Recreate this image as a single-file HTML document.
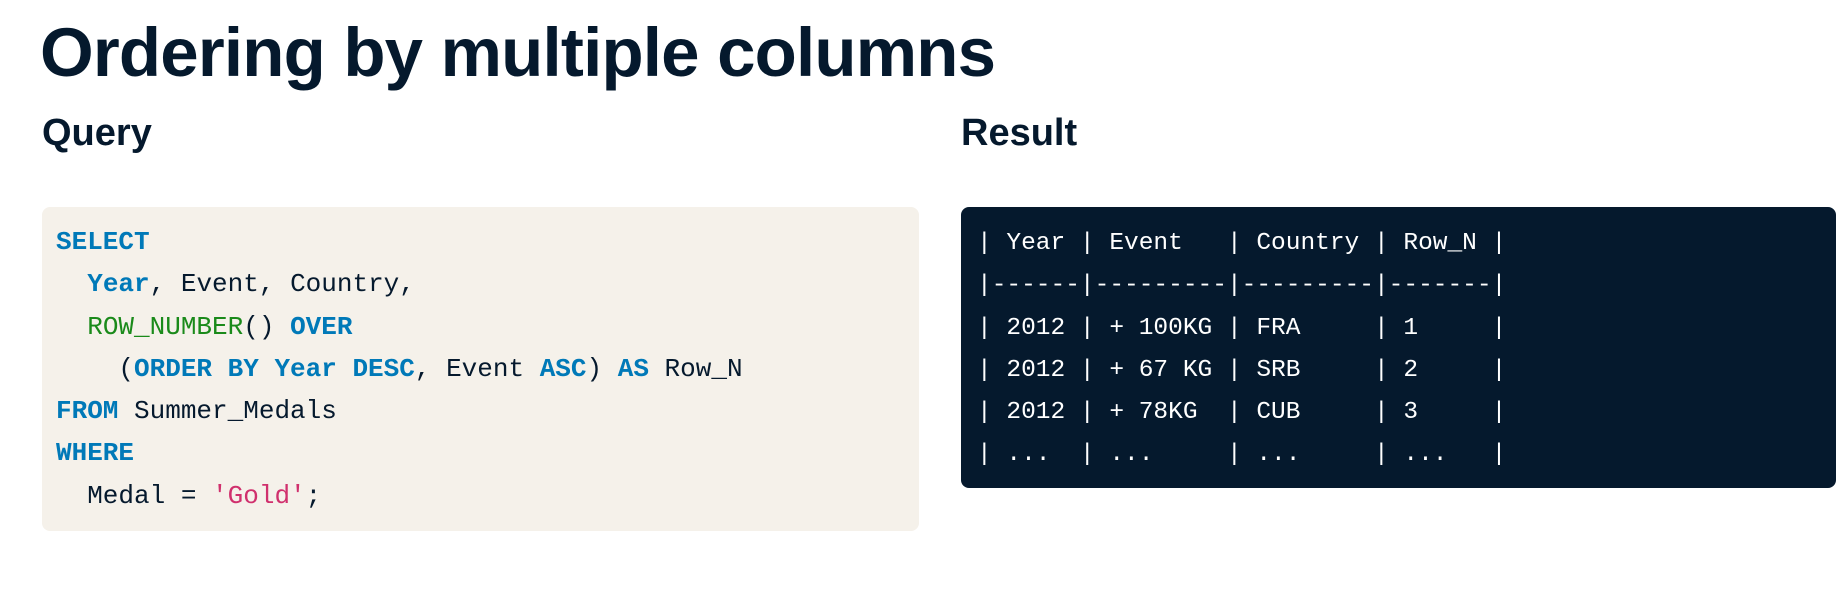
<!DOCTYPE html>
<html><head><meta charset="utf-8"><style>
body{margin:0;width:1842px;height:589px;background:#fff;font-family:"Liberation Sans",sans-serif;color:#05192d;position:relative;overflow:hidden}
h1{position:absolute;left:40px;top:13px;margin:0;font-size:69px;font-weight:bold;letter-spacing:-0.8px}
h2{position:absolute;margin:0;font-size:38px;font-weight:bold;top:112px}
.box{position:absolute;top:207px;border-radius:8px;font-family:"Liberation Mono",monospace;font-size:24.5px;white-space:pre;line-height:42.3px;padding-top:16px;box-sizing:border-box}
.q{left:42px;width:877px;height:324px;background:#f5f1ea;color:#05192d;padding-left:14px;font-size:26px;padding-top:14px}
.r{left:961px;width:875px;height:281px;background:#05192d;color:#fff;padding-left:16px}
.k{color:#0079b8;font-weight:bold}.f{color:#1a8a1a}.s{color:#d0306d}
</style></head><body>
<h1>Ordering by multiple columns</h1>
<h2 style="left:42px">Query</h2>
<h2 style="left:961px">Result</h2>
<div class="box q"><span class="k">SELECT</span>
  <span class="k">Year</span>, Event, Country,
  <span class="f">ROW_NUMBER</span>() <span class="k">OVER</span>
    (<span class="k">ORDER BY Year DESC</span>, Event <span class="k">ASC</span>) <span class="k">AS</span> Row_N
<span class="k">FROM</span> Summer_Medals
<span class="k">WHERE</span>
  Medal = <span class="s">'Gold'</span>;</div>
<div class="box r">| Year | Event   | Country | Row_N |
|------|---------|---------|-------|
| 2012 | + 100KG | FRA     | 1     |
| 2012 | + 67 KG | SRB     | 2     |
| 2012 | + 78KG  | CUB     | 3     |
| ...  | ...     | ...     | ...   |</div>
</body></html>
